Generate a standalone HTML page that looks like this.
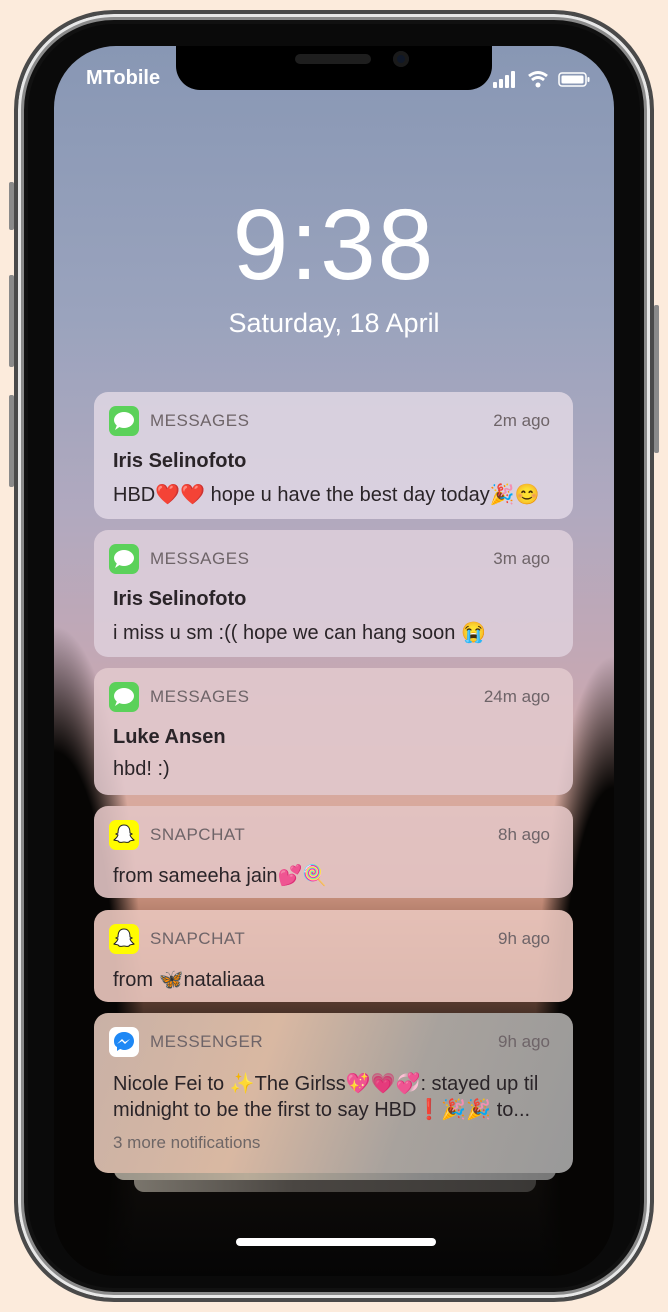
<!DOCTYPE html>
<html><head><meta charset="utf-8"><style>
*{margin:0;padding:0;box-sizing:border-box}
body{width:668px;height:1312px;background:#fcebdc;position:relative;overflow:hidden;font-family:"Liberation Sans","Noto Sans CJK JP",sans-serif}
.phone{position:absolute;left:14px;top:10px;width:640px;height:1292px;border-radius:100px;background:#0a0a0a;border:4px solid #4a4a4a;box-shadow:inset 0 0 0 3px #e8e8e8,inset 0 0 0 6px #8a8a8a,inset 0 0 0 10px #111}
.btn{position:absolute;background:#8a8a8a;width:5px;border-radius:2px}
.screen{position:absolute;left:54px;top:46px;width:560px;height:1230px;border-radius:62px;overflow:hidden;
background:linear-gradient(180deg,#8897b4 0%,#9aa3bd 22%,#b1a9bf 38%,#c6a8b3 52%,#d9a99c 62%,#d39a86 68%,#8a5a48 74%,#1a1410 82%,#050505 100%)}
.trees{position:absolute;inset:0;background:
radial-gradient(ellipse 90px 420px at 0px 1000px,#060504 70%,transparent 100%),
radial-gradient(ellipse 80px 440px at 560px 1050px,#060504 70%,transparent 100%)}
.notch{position:absolute;left:176px;top:46px;width:316px;height:44px;background:#000;border-radius:0 0 24px 24px}
.speaker{position:absolute;left:295px;top:54px;width:76px;height:10px;border-radius:5px;background:#1e1e1e}
.cam{position:absolute;left:393px;top:51px;width:16px;height:16px;border-radius:50%;background:#101828;box-shadow:inset 0 0 0 4px #1a1a1a}
.carrier{position:absolute;left:86px;top:67px;color:#fff;font-size:20px;font-weight:bold}
.clock{position:absolute;left:0;width:668px;text-align:center;top:188px;color:#fff;font-size:100px;letter-spacing:2px}
.date{position:absolute;left:0;width:668px;text-align:center;top:308px;color:#fff;font-size:27px}
.card{position:absolute;left:94px;width:479px;border-radius:14px;color:#2a2428}
.icon{position:absolute;left:15px;top:14px;width:30px;height:30px;border-radius:7px}
.app{position:absolute;left:56px;top:19px;font-size:17px;color:#6e6468;letter-spacing:.5px}
.ago{position:absolute;right:23px;top:19px;font-size:17px;color:#6e6468}
.t{position:absolute;left:19px;font-size:20px;font-weight:bold}
.b{position:absolute;left:19px;font-size:20px;white-space:nowrap}
.home{position:absolute;left:236px;top:1238px;width:200px;height:8px;border-radius:4px;background:#fff}
</style></head><body>
<div class="btn" style="left:9px;top:182px;height:48px"></div>
<div class="btn" style="left:9px;top:275px;height:92px"></div>
<div class="btn" style="left:9px;top:395px;height:92px"></div>
<div class="btn" style="left:654px;top:305px;height:148px"></div>
<div class="phone"></div>
<div class="screen"><div class="trees"></div></div>
<div class="notch"></div>
<div class="speaker"></div><div class="cam"></div>
<div class="carrier">MTobile</div>
<svg style="position:absolute;left:493px;top:70px" width="100" height="20" viewBox="0 0 100 20">
<rect x="0" y="12" width="4" height="6" rx="1" fill="#fff"/><rect x="6" y="9" width="4" height="9" rx="1" fill="#fff"/><rect x="12" y="5" width="4" height="13" rx="1" fill="#fff"/><rect x="18" y="1" width="4" height="17" rx="1" fill="#fff"/>
<path d="M36 6 Q45 -1 54 6" stroke="#fff" stroke-width="3" fill="none"/><path d="M39 10 Q45 5 51 10" stroke="#fff" stroke-width="3" fill="none"/><circle cx="45" cy="15" r="2.5" fill="#fff"/>
<rect x="66" y="3" width="27" height="13" rx="3" fill="none" stroke="#fff" stroke-width="1.5"/><rect x="68.5" y="5.5" width="22" height="8" rx="1.5" fill="#fff"/><rect x="94.5" y="7" width="2" height="5" rx="1" fill="#fff"/>
</svg>
<div class="clock">9:38</div>
<div class="date">Saturday, 18 April</div>

<div class="card" style="top:392px;height:127px;background:rgba(225,215,228,.85)">
<div class="icon" style="background:#5bd15a"><svg width="30" height="30"><ellipse cx="15" cy="14" rx="10" ry="8" fill="#fff"/><path d="M8 19 L6 24 L12 20Z" fill="#fff"/></svg></div>
<div class="app">MESSAGES</div><div class="ago">2m ago</div>
<div class="t" style="top:58px">Iris Selinofoto</div>
<div class="b" style="top:90px">HBD❤️❤️ hope u have the best day today🎉😊</div></div>

<div class="card" style="top:530px;height:127px;background:rgba(222,208,220,.85)">
<div class="icon" style="background:#5bd15a"><svg width="30" height="30"><ellipse cx="15" cy="14" rx="10" ry="8" fill="#fff"/><path d="M8 19 L6 24 L12 20Z" fill="#fff"/></svg></div>
<div class="app">MESSAGES</div><div class="ago">3m ago</div>
<div class="t" style="top:58px">Iris Selinofoto</div>
<div class="b" style="top:90px">i miss u sm :(( hope we can hang soon 😭</div></div>

<div class="card" style="top:668px;height:127px;background:rgba(225,200,205,.88)">
<div class="icon" style="background:#5bd15a"><svg width="30" height="30"><ellipse cx="15" cy="14" rx="10" ry="8" fill="#fff"/><path d="M8 19 L6 24 L12 20Z" fill="#fff"/></svg></div>
<div class="app">MESSAGES</div><div class="ago">24m ago</div>
<div class="t" style="top:58px">Luke Ansen</div>
<div class="b" style="top:90px">hbd! :)</div></div>

<div class="card" style="top:806px;height:92px;background:rgba(226,196,196,.9)">
<div class="icon" style="background:#fffc00"><svg width="30" height="30"><path d="M15 5c-5 0-6 4-6 8l-2 1 2 1c-1 3-3 4-4 5 2 1 4 0 5 2 2 1 3 0 5 0s3 1 5 0c1-2 3-1 5-2-1-1-3-2-4-5l2-1-2-1c0-4-1-8-6-8z" fill="#fff" stroke="#222" stroke-width="1"/></svg></div>
<div class="app">SNAPCHAT</div><div class="ago">8h ago</div>
<div class="b" style="top:57px">from sameeha jain💕🍭</div></div>

<div class="card" style="top:910px;height:92px;background:rgba(232,196,188,.92)">
<div class="icon" style="background:#fffc00"><svg width="30" height="30"><path d="M15 5c-5 0-6 4-6 8l-2 1 2 1c-1 3-3 4-4 5 2 1 4 0 5 2 2 1 3 0 5 0s3 1 5 0c1-2 3-1 5-2-1-1-3-2-4-5l2-1-2-1c0-4-1-8-6-8z" fill="#fff" stroke="#222" stroke-width="1"/></svg></div>
<div class="app">SNAPCHAT</div><div class="ago">9h ago</div>
<div class="b" style="top:57px">from 🦋nataliaaa</div></div>

<div style="position:absolute;left:134px;top:1170px;width:402px;height:22px;border-radius:0 0 10px 10px;background:linear-gradient(90deg,#7a756c,#4a4642 40%,#3a3836)"></div>
<div style="position:absolute;left:114px;top:1160px;width:442px;height:20px;border-radius:0 0 10px 10px;background:linear-gradient(90deg,#9a958a,#b8ab98 30%,#888 70%,#777)"></div>
<div class="card" style="top:1013px;height:160px;background:linear-gradient(110deg,#c9b1a6 0%,#d9b8a2 35%,#a8a29d 65%,#999 100%)">
<div class="icon" style="background:#fff"><svg width="30" height="30"><path d="M15 5c-6 0-10 4-10 9 0 3 1 5 3 6v4l3-2c1 0 2 1 4 1 6 0 10-4 10-9s-4-9-10-9z" fill="#1e88f5"/><path d="M8 17l5-5 3 3 5-3-5 5-3-3z" fill="#fff"/></svg></div>
<div class="app">MESSENGER</div><div class="ago">9h ago</div>
<div class="b" style="top:58px">Nicole Fei to ✨The Girlss💖💗💞: stayed up til</div>
<div class="b" style="top:84px">midnight to be the first to say HBD❗🎉🎉 to...</div>
<div class="b" style="top:120px;font-size:17px;color:#6e6666">3 more notifications</div></div>

<div class="home"></div>
</body></html>
